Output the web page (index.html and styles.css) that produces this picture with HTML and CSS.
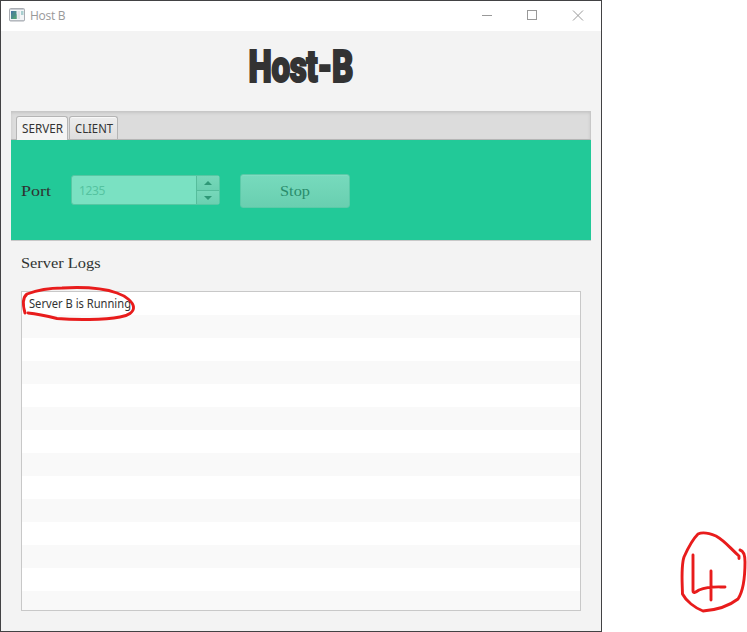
FILE: index.html
```html
<!DOCTYPE html>
<html lang="en">
<head>
<meta charset="utf-8">
<title>Host B</title>
<link rel="stylesheet" href="styles.css">
</head>
<body>
<main class="window">
  <header class="titlebar">
    <svg class="app-icon" width="16" height="14" viewBox="0 0 16 14">
      <rect x=".5" y=".5" width="15" height="12.5" rx="1" fill="#f3f5f7" stroke="#a9adb3"/>
      <path d="M1 1.5h14" stroke="#c9cdd3"/>
      <rect x="2" y="3" width="5.5" height="8" fill="#4d8b8d"/>
      <path d="M2 3h3L2 7z" fill="#4777a0"/>
      <path d="M7.5 6v5H3z" fill="#549e79"/>
      <rect x="8.5" y="3" width="2.5" height="8" fill="#dfe2e6"/>
      <rect x="12" y="3" width="2.5" height="4" fill="#a9cfd0"/>
      <path d="M1 12.5h14" stroke="#b5b9bf"/>
    </svg>
    <span class="caption">Host B</span>
    <svg class="controls" width="104" height="12" viewBox="0 0 104 12" fill="none" stroke="#999">
      <path d="M0 5.5h10M91 .5l10 10M101 .5l-10 10"/>
      <rect x="45.500" y=".5" width="9" height="9"/>
    </svg>
  </header>
  <h1 class="heading">
    <svg width="150" height="60"><text x="22.500" y="37" textLength="104.500" lengthAdjust="spacingAndGlyphs">Host-B</text></svg>
  </h1>
  <nav class="tabs">
    <div class="tab active"><svg width="44" height="18"><text x="0" y="12" textLength="41" lengthAdjust="spacingAndGlyphs">SERVER</text></svg></div>
    <div class="tab"><svg width="42" height="18"><text x="0" y="12" textLength="38" lengthAdjust="spacingAndGlyphs">CLIENT</text></svg></div>
  </nav>
  <section class="panel">
    <svg class="serif port" width="50" height="24"><text x="0" y="16" textLength="30" lengthAdjust="spacingAndGlyphs">Port</text></svg>
    <div class="spinner">
      <div class="value">1235</div>
      <div class="arrows">
        <div class="arrow"><svg width="8" height="4"><path d="M0 4L4 0l4 4z"/></svg></div>
        <div class="arrow"><svg width="8" height="4"><path d="M0 0l4 4 4-4z"/></svg></div>
      </div>
    </div>
    <div class="stop"><svg class="serif" width="40" height="24"><text x="1" y="16" textLength="30" lengthAdjust="spacingAndGlyphs">Stop</text></svg></div>
  </section>
  <svg class="serif logs-title" width="90" height="24"><text x="0" y="16" textLength="79.500" lengthAdjust="spacingAndGlyphs">Server Logs</text></svg>
  <section class="logs">
    <svg width="160" height="23"><text x="7" y="16" textLength="102" lengthAdjust="spacingAndGlyphs">Server B is Running</text></svg>
  </section>
</main>
<svg class="ink" width="747" height="632" viewBox="0 0 747 632">
  <path d="M25 313C23 306 22 298 27 294C35 291 48 288 62 288C80 287 103 288 117 293C126 296 133 302 133.500 307C134 312 128 316 120 317C104 320 75 320 57 318.500C47 316 38 314 28 313"/>
  <path d="M739 558.500L739 556C730 548 725 541 716 536C709 533 702 532 698 534C694 538 688 548 684 557C681 566 682 577 682.500 594C686 601 695 608 703 611C716 610 729 606 738 599C744 590 745 577 745 562C745 555 744 551 740 550M693 555V591C693 594 696 592 699 590C709 586 716 587 725 587M711 571V600"/>
</svg>
</body>
</html>
```
FILE: styles.css
```css
* { box-sizing: border-box; }
body {
  margin: 0;
  background: #fff;
  color: #333;
  font: 12px "Noto Sans", sans-serif;
  position: relative;
  overflow: hidden;
}
svg { display: block; flex: none; }
.window {
  width: 602px;
  height: 632px;
  border: 1px solid #424244;
  background: #f3f3f3;
}
.titlebar {
  height: 30px;
  background: #fff;
  display: flex;
  align-items: center;
  padding: 0 15px 0 8px;
}
.app-icon { margin-top: -2px; }
.caption {
  margin: -2px 0 0 5px;
  color: #999;
  font: 12px "Open Sans", sans-serif;
  letter-spacing: -.3px;
}
.controls { margin-left: auto; }
.heading {
  margin: 0;
  height: 80px;
  display: flex;
  justify-content: center;
  padding-top: 14px;
  font: 900 44px Roboto, sans-serif;
}
.heading text { fill: #333; stroke: #333; stroke-width: 2px; letter-spacing: -.5px; }
.tabs {
  margin: 0 10px;
  height: 29px;
  display: flex;
  align-items: flex-end;
  gap: 1px;
  padding-left: 5px;
  background: #dcdcdc;
  border-right: 1px solid #c8c8c8;
  border-bottom: 1px solid #b5b5b5;
  box-shadow: inset 0 2px 3px #c5c5c5;
}
.tab {
  height: 23px;
  width: 49px;
  padding: 4px 0 0 5px;
  border: 1px solid #b5b5b5;
  border-bottom: 0;
  border-radius: 3px 3px 0 0;
  background: linear-gradient(#ededed, #dedede);
  box-shadow: inset 0 1px #f8f8f8;
}
.tab.active {
  width: 52px;
  height: 24px;
  margin-bottom: -1px;
  background: #f4f4f4;
}
.tab text, .logs text { fill: #333; }
.panel {
  height: 101px;
  margin: 0 10px;
  padding: 0 10px;
  background: #22c998;
  border-bottom: 1px solid #c8c8c8;
  display: flex;
  align-items: center;
}
.serif { font: 15px "Liberation Serif", serif; fill: #2f3331; }
.port { margin-top: 3px; }
.spinner {
  width: 149px;
  height: 30px;
  display: flex;
  border: 1px solid #56c7a3;
  border-radius: 3px;
  background: #7ae1c2;
}
.value {
  flex: 1;
  padding: 6px 7px;
  font: 12px/18px "Noto Sans", sans-serif;
  letter-spacing: -.35px;
  color: #55c3a0;
}
.arrows { width: 23px; border-left: 1px solid #56bd9c; }
.arrow {
  height: 14px;
  display: flex;
  align-items: center;
  justify-content: center;
  background: linear-gradient(#77d8ba, #6bd0b1);
  fill: #2f9877;
}
.arrow + .arrow { border-top: 1px solid #56bd9c; }
.stop {
  margin: 1px 0 0 20px;
  width: 110px;
  height: 34px;
  padding: 5px 0 0 38px;
  border: 1px solid #5bcaa8;
  border-radius: 3px;
  background: linear-gradient(#77dabd, #69cfb0);
  box-shadow: inset 0 1px #80ddc2;
}
.stop .serif { fill: #298c6c; }
.logs-title { margin: 11px 0 0 20px; }
.logs {
  width: 560px;
  height: 320px;
  margin: 15px 0 0 20px;
  border: 1px solid #c8c8c8;
  background: repeating-linear-gradient(#fff 0 23px, #f9f9f9 23px 46px);
}
.ink {
  position: absolute;
  left: 0;
  top: 0;
  fill: none;
  stroke: #e81c1c;
  stroke-width: 2.9px;
  stroke-linecap: round;
  stroke-linejoin: round;
}
```
